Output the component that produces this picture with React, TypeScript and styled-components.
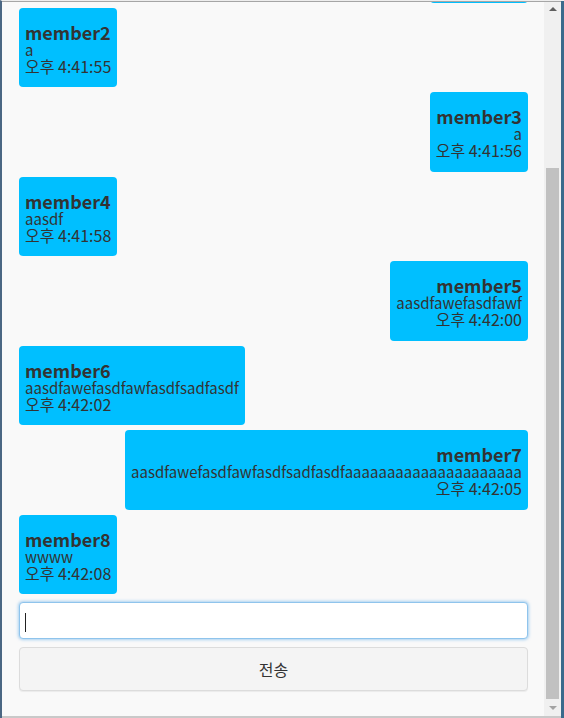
import React from "react";
import styled, { createGlobalStyle } from "styled-components";

const GlobalStyle = createGlobalStyle`
  html, body { margin: 0; padding: 0; overflow: hidden; }
  body { font-family: "Noto Sans CJK KR", "Noto Sans", sans-serif; }
  * { box-sizing: border-box; }
`;

const Desktop = styled.div`
  height: 718px;
  width: 564px;
  background: #3a6a8c;
  border-left: 2px solid #4b6783;
  border-top: 1px solid #eeeeee;
  display: flex;
`;

const Window = styled.div`
  flex: 1;
  display: flex;
  background: #f9f9f9;
  border-top: 1px solid #a6a6a6;
  border-bottom: 2px solid #c9c9c9;
  margin-right: 3px;
  min-height: 0;
`;

const Content = styled.div`
  flex: 1;
  min-width: 0;
  overflow: hidden;
  display: flex;
  flex-direction: column;
  justify-content: flex-end;
  padding: 0 16px 25px 17px;
`;

const MessageList = styled.div`
  display: flex;
  flex-direction: column;
  gap: 5px;
`;

const Bubble = styled.div<{ $mine: boolean }>`
  align-self: ${(p) => (p.$mine ? "flex-end" : "flex-start")};
  text-align: ${(p) => (p.$mine ? "right" : "left")};
  background: #00bfff;
  border-radius: 4px;
  padding: 15px 6px 12.5px;
  color: #333333;
  white-space: nowrap;
`;

const Name = styled.div`
  font-size: 18px;
  font-weight: 700;
  line-height: 18px;
`;

const Text = styled.div`
  font-size: 15px;
  line-height: 17px;
`;

const Time = styled.div`
  font-size: 16px;
  line-height: 17px;
`;

const Composer = styled.div`
  display: flex;
  flex-direction: column;
  gap: 8px;
  margin-top: 8px;
`;

const InputWrap = styled.div`
  position: relative;
  &::after {
    content: "";
    position: absolute;
    left: 6px;
    top: 11px;
    width: 1px;
    height: 19px;
    background: #222;
  }
`;

const Input = styled.input`
  width: 100%;
  height: 37px;
  border: 1px solid #8fc4ec;
  border-radius: 4px;
  background: #ffffff;
  box-shadow: 0 0 3px 1px rgba(102, 175, 233, 0.55);
  outline: none;
  caret-color: transparent;
  font: inherit;
  padding: 0 6px;
`;

const SendButton = styled.button`
  height: 44px;
  width: 100%;
  border: 1px solid #dcdcdc;
  border-radius: 4px;
  background: #f4f4f4;
  box-shadow: 0 1px 1px rgba(0, 0, 0, 0.06);
  font-family: inherit;
  font-size: 16px;
  color: #333333;
`;

const ScrollBar = styled.div`
  width: 17px;
  background: #f0f0f0;
  display: flex;
  flex-direction: column;
`;

const ArrowBox = styled.div`
  height: 17px;
  display: flex;
  align-items: center;
  justify-content: center;
`;

const Arrow = styled.div<{ $down?: boolean }>`
  width: 0;
  height: 0;
  border-left: 4px solid transparent;
  border-right: 4px solid transparent;
  ${(p) =>
    p.$down
      ? "border-top: 4px solid #a3a3a3;"
      : "border-bottom: 4px solid #5f5f5f; margin-top: -4px;"}
`;

const Track = styled.div`
  flex: 1;
  display: flex;
  padding: 149px 2px 0 2px;
`;

const Thumb = styled.div`
  flex: 1;
  background: #c1c1c1;
`;

const messages = [
  { name: "member1", text: "a", time: "오후 4:41:53" },
  { name: "member2", text: "a", time: "오후 4:41:55" },
  { name: "member3", text: "a", time: "오후 4:41:56" },
  { name: "member4", text: "aasdf", time: "오후 4:41:58" },
  { name: "member5", text: "aasdfawefasdfawf", time: "오후 4:42:00" },
  { name: "member6", text: "aasdfawefasdfawfasdfsadfasdf", time: "오후 4:42:02" },
  {
    name: "member7",
    text: "aasdfawefasdfawfasdfsadfasdfaaaaaaaaaaaaaaaaaaaaa",
    time: "오후 4:42:05",
  },
  { name: "member8", text: "wwww", time: "오후 4:42:08" },
];

export default function App() {
  return (
    <>
      <GlobalStyle />
      <Desktop>
        <Window>
          <Content>
            <MessageList>
              {messages.map((m, i) => (
                <Bubble key={m.name} $mine={i % 2 === 0}>
                  <Name>{m.name}</Name>
                  <Text>{m.text}</Text>
                  <Time>{m.time}</Time>
                </Bubble>
              ))}
            </MessageList>
            <Composer>
              <InputWrap>
                <Input type="text" />
              </InputWrap>
              <SendButton type="button">전송</SendButton>
            </Composer>
          </Content>
          <ScrollBar>
            <ArrowBox>
              <Arrow />
            </ArrowBox>
            <Track>
              <Thumb />
            </Track>
            <ArrowBox>
              <Arrow $down />
            </ArrowBox>
          </ScrollBar>
        </Window>
      </Desktop>
    </>
  );
}
